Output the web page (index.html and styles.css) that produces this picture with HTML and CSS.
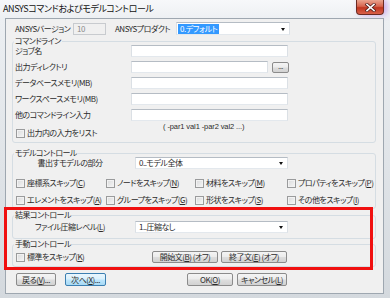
FILE: index.html
```html
<!DOCTYPE html>
<html lang="ja">
<head>
    <meta charset="UTF-8">
    <title>ANSYSコマンドおよびモデルコントロール</title>
    <link rel="stylesheet" href="styles.css">
</head>
<body>
    <div class="window">
        <div class="titlebar">
            <span class="title">ANSYSコマンドおよびモデルコントロール</span>
            <span class="close">
                <svg width="11" height="9" viewBox="0 0 11 9">
                    <path d="M2 1.5 L9 7.5 M9 1.5 L2 7.5" stroke="#5a2420" stroke-width="3.2" stroke-linecap="square"/>
                    <path d="M2 1.5 L9 7.5 M9 1.5 L2 7.5" stroke="#fff" stroke-width="1.6" stroke-linecap="square"/>
                </svg>
            </span>
        </div>

        <div class="client">
            <div class="top-row">
                <span class="lbl-ver">ANSYSバージョン</span>
                <span class="input disabled ver">10</span>
                <span class="lbl-prod">ANSYSプロダクト</span>
                <span class="select prod"><span class="sel-hl">0.デフォルト</span></span>
            </div>

            <fieldset class="group cmd">
                <legend>コマンドライン</legend>
                <div class="field first"><label>ジョブ名</label><span class="input wide"></span></div>
                <div class="field"><label>出力ディレクトリ</label><span class="input dir"></span><span class="btn browse">...</span></div>
                <div class="field"><label>データベースメモリ(MB)</label><span class="input wide"></span></div>
                <div class="field"><label>ワークスペースメモリ(MB)</label><span class="input wide"></span></div>
                <div class="field"><label>他のコマンドライン入力</label><span class="input wide"></span></div>
                <div class="opts">
                    <span class="check list"><i class="box"></i>出力内の入力をリスト</span>
                    <span class="hint">( -par1 val1 -par2 val2 ...)</span>
                </div>
            </fieldset>

            <fieldset class="group model">
                <legend>モデルコントロール</legend>
                <div class="sel-row"><label>書出すモデルの部分</label><span class="select long">0..モデル全体</span></div>
                <div class="skips">
                    <span class="check"><i class="box"></i>座標系スキップ(<u>C</u>)</span>
                    <span class="check"><i class="box"></i>ノードをスキップ(<u>N</u>)</span>
                    <span class="check"><i class="box"></i>材料をスキップ(<u>M</u>)</span>
                    <span class="check"><i class="box"></i>プロパティをスキップ(<u>P</u>)</span>
                    <span class="check"><i class="box"></i>エレメントをスキップ(<u>A</u>)</span>
                    <span class="check"><i class="box"></i>グループをスキップ(<u>G</u>)</span>
                    <span class="check"><i class="box"></i>形状をスキップ(<u>S</u>)</span>
                    <span class="check"><i class="box"></i>その他をスキップ(<u>I</u>)</span>
                </div>
            </fieldset>

            <fieldset class="group result">
                <legend>結果コントロール</legend>
                <div class="sel-row"><label>ファイル圧縮レベル(<u>L</u>)</label><span class="select long">1..圧縮なし</span></div>
            </fieldset>

            <fieldset class="group manual">
                <legend>手動コントロール</legend>
                <div class="manual-row">
                    <span class="check std"><i class="box"></i>標準をスキップ(<u>K</u>)</span>
                    <span class="btn stmt">開始文(<u>B</u>) (オフ)</span>
                    <span class="btn stmt">終了文(<u>E</u>) (オフ)</span>
                </div>
            </fieldset>

            <div class="actions">
                <span class="btn back">戻る(<u>V</u>)...</span>
                <span class="btn next">次へ(<u>X</u>)...</span>
                <span class="btn ok">OK(<u>O</u>)</span>
                <span class="btn cancel">キャンセル(<u>L</u>)</span>
            </div>
        </div>

        <div class="highlight"></div>
    </div>
</body>
</html>
```

FILE: styles.css
```css
* {
    margin: 0;
    padding: 0;
    box-sizing: border-box;
}

body {
    width: 390px;
    height: 298px;
    overflow: hidden;
    background: #e3e7eb;
    font-family: "Noto Sans CJK JP", sans-serif;
    font-size: 8px;
    line-height: 10px;
    color: #2b2b2b;
    font-feature-settings: "palt";
    letter-spacing: -0.5px;
}

u {
    text-decoration: underline;
    text-underline-offset: 1px;
}

.window {
    position: relative;
    width: 390px;
    height: 298px;
    background: linear-gradient(180deg, #f7f8fa 0%, #eceff2 20px, #d4d9de 100%);
}

/* title bar */
.titlebar {
    height: 18px;
    display: flex;
    align-items: flex-start;
    justify-content: space-between;
    padding-left: 3px;
}

.title {
    font-size: 9px;
    line-height: 18px;
    color: #111;
    letter-spacing: -0.4px;
}

.close {
    width: 28px;
    height: 15px;
    margin-right: 6px;
    border: 1px solid #6b2a22;
    border-top: none;
    border-radius: 0 0 4px 4px;
    background: linear-gradient(180deg, #eaa48f 0%, #d7654f 45%, #c0351f 55%, #d9614a 100%);
    display: flex;
    align-items: center;
    justify-content: center;
    box-shadow: 3px 0 6px rgba(150, 80, 220, 0.45);
}

/* dialog body */
.client {
    margin: 0 6px 0 5px;
    height: 276px;
    background: #f0f0f0;
    border: 1px solid #9ea7b0;
    position: relative;
}

.top-row {
    display: flex;
    align-items: center;
    height: 13px;
    margin-top: 3px;
    padding-left: 9px;
}

.lbl-ver {
    width: 58px;
}

.lbl-prod {
    width: 61px;
    margin-left: 9px;
}

.input {
    display: block;
    height: 12px;
    background: #fff;
    border: 1px solid;
    border-color: #b5bcc4 #dbe0e5 #e3e8ed #dbe0e5;
}

.input.disabled {
    background: #f0f0f0;
    border-color: #c8cbcf;
    color: #8a8a8a;
    padding-left: 3px;
    line-height: 10px;
}

.ver {
    width: 33px;
    height: 12px;
}

.select {
    position: relative;
    display: block;
    height: 13px;
    background: #fff;
    border: 1px solid;
    border-color: #b5bcc4 #dbe0e5 #e3e8ed #dbe0e5;
    padding-left: 3px;
    line-height: 11px;
}

.select::after {
    content: "";
    position: absolute;
    right: 4px;
    top: 5px;
    border-left: 2.5px solid transparent;
    border-right: 2.5px solid transparent;
    border-top: 3px solid #111;
}

.prod {
    width: 114px;
    padding-left: 1px;
}

.sel-hl {
    display: inline-block;
    background: #3399ff;
    color: #fff;
    padding: 0 2px;
    line-height: 10px;
}

/* group boxes */
.group {
    margin-left: 6px;
    width: 364px;
    border: 1px solid #d5dde3;
    border-radius: 3px;
    padding: 0 0 3px 2px;
}

.group legend {
    line-height: 10px;
    height: 10px;
    padding: 0 1px;
    margin-left: -1px;
}

.cmd {
    margin-top: 1px;
    display: flex;
    flex-direction: column;
}

.field {
    display: flex;
    align-items: center;
    height: 12px;
    margin-top: 4px;
}

.field.first {
    margin-top: -1px;
}

.field label {
    width: 116px;
}

.wide {
    width: 157px;
}

.dir {
    width: 137px;
}

.btn {
    display: flex;
    align-items: center;
    justify-content: center;
    height: 12px;
    border: 1px solid #8b8b8b;
    border-radius: 2px;
    background: linear-gradient(180deg, #f4f4f4 0%, #ececec 48%, #dedede 52%, #d2d2d2 100%);
    white-space: nowrap;
}

.browse {
    width: 17px;
    height: 11px;
    margin-left: 4px;
    color: #555;
    line-height: 6px;
    align-items: flex-start;
}

.opts {
    display: flex;
    align-items: flex-start;
    height: 16px;
    margin-top: 2px;
}

.check {
    display: flex;
    align-items: center;
    white-space: nowrap;
}

.box {
    display: inline-block;
    width: 9px;
    height: 9px;
    margin-right: 2px;
    border: 1px solid #9a9b9c;
    background: linear-gradient(135deg, #d9dadb, #f6f6f6);
    box-shadow: inset 0 0 0 1px #f2f2f2;
}

.list {
    width: 147px;
    margin-top: 5px;
    margin-left: 1px;
}

.hint {
    letter-spacing: -0.1px;
    font-family: "Liberation Sans", sans-serif;
    font-size: 7.5px;
    margin-top: -1px;
}

.model {
    margin-top: 5px;
}

.sel-row {
    display: flex;
    align-items: center;
    height: 12px;
    margin-top: -1px;
}

.sel-row label {
    width: 110px;
    text-align: center;
}

.long {
    width: 153px;
    height: 12px;
    margin-left: 10px;
    line-height: 10px;
}

.long::after {
    top: 4px;
}

.skips {
    display: grid;
    grid-template-columns: 90px 89px 92px auto;
    row-gap: 7px;
    margin-top: 9px;
    padding-left: 1px;
}

.result {
    margin-top: 1px;
    padding-bottom: 5px;
}

.result .sel-row {
    margin-top: 1px;
}

.manual-row {
    display: flex;
    align-items: center;
    height: 12px;
    margin-top: 2px;
}

.std {
    width: 136px;
    margin-left: 1px;
}

.stmt {
    width: 66px;
    margin-right: 3px;
}

.actions {
    display: flex;
    margin-top: 6px;
    padding-left: 10px;
}

.actions .btn {
    height: 13px;
}

.back {
    width: 40px;
}

.next {
    width: 41px;
    margin-left: 9px;
    border-color: #3c7fb1;
    background: linear-gradient(180deg, #eaf6fd 0%, #d9f0fc 48%, #bee6fd 52%, #a7d9f5 100%);
}

.ok {
    width: 46px;
    margin-left: 81px;
}

.cancel {
    width: 50px;
    margin-left: 4px;
}

/* annotation frame drawn over the dialog */
.highlight {
    position: absolute;
    left: 4px;
    top: 207px;
    width: 369px;
    height: 63px;
    border: 3px solid #f01010;
}
```
